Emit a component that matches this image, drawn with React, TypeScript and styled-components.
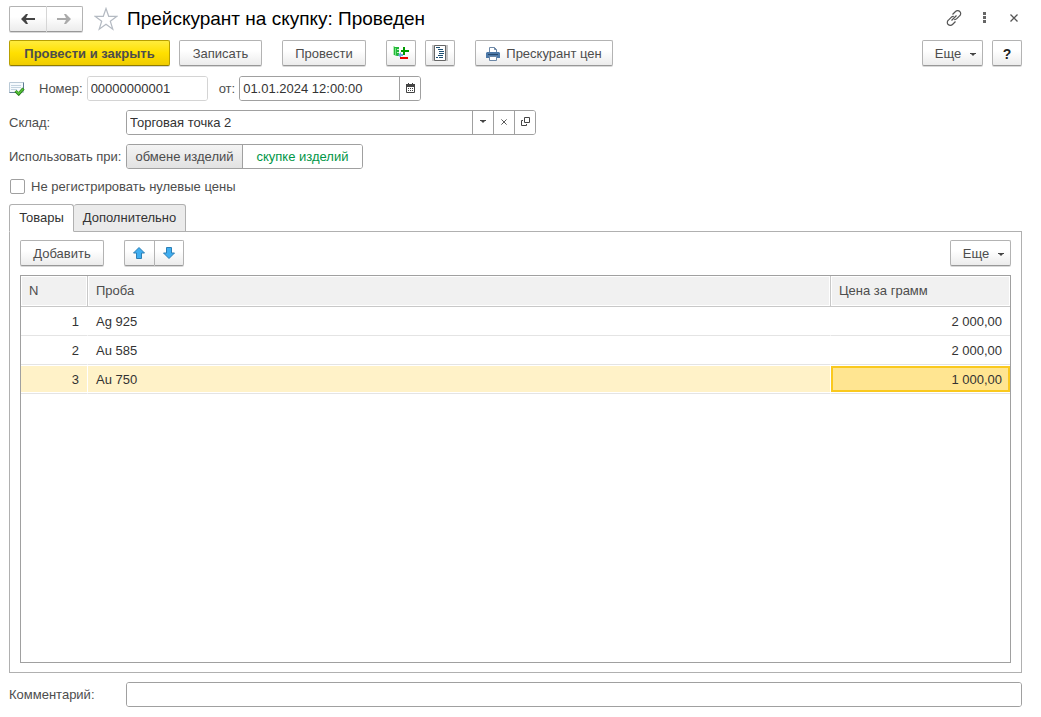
import React, { useState } from "react";
import styled, { createGlobalStyle, css } from "styled-components";

const GlobalStyle = createGlobalStyle`
  * { box-sizing: border-box; }
  body { margin: 0; background: #fff; }
  body, button, input, table {
    font-family: "Liberation Sans", Arial, sans-serif;
    font-size: 13px;
    line-height: 16px;
    color: #4d4d4d;
  }
  svg { flex: none; }
`;

const Page = styled.main`
  display: flex;
  flex-direction: column;
  min-height: 100vh;
  padding: 6px 19px 10px 9px;
`;

const TitleBar = styled.header`
  display: flex;
  align-items: center;
  height: 25px;
`;

const Title = styled.h1`
  flex: 1;
  margin: 0 0 0 9px;
  font-size: 19px;
  line-height: 24px;
  font-weight: 400;
  color: #000;
`;

const raised = css`
  border: 1px solid #b3b3b3;
  border-bottom-color: #989898;
  background: linear-gradient(#fff 40%, #ececec);
  box-shadow: 0 1px 0 #d9d9d9;
`;

const Button = styled.button<{ $primary?: boolean; $more?: boolean; $width?: number }>`
  ${raised}
  display: inline-flex;
  align-items: center;
  justify-content: center;
  gap: ${(p) => (p.$more ? 9 : 6)}px;
  height: 26px;
  padding: 2px 0 0 ${(p) => (p.$more ? 6 : 0)}px;
  width: ${(p) => p.$width ?? 30}px;
  border-radius: 2px;
  white-space: nowrap;
  ${(p) =>
    p.$primary &&
    css`
      border-color: #b8a000;
      border-bottom-color: #8f7c00;
      background: linear-gradient(#ffec3d, #ffe000 50%, #f0cc00);
      font-weight: 700;
    `}
`;

const IconButton = styled(Button)`
  padding: 0;
`;

const Segments = styled.div<{ $divider: string }>`
  display: inline-flex;
  button + button { border-left: 1px solid ${(p) => p.$divider}; }
`;

const Segment = styled.button<{ $width: number }>`
  ${raised}
  display: flex;
  align-items: center;
  justify-content: center;
  width: ${(p) => p.$width}px;
  height: 26px;
  padding: 0 1px 0 0;
  &:first-child { border-radius: 2px 0 0 2px; border-right: 0; }
  &:last-child { border-radius: 0 2px 2px 0; }
`;

const Star = styled.button`
  display: flex;
  margin-left: 11px;
  padding: 0;
  border: 0;
  background: none;
`;

const WindowTools = styled.div`
  display: flex;
  align-items: center;
`;

const Tool = styled.button`
  display: flex;
  align-items: center;
  justify-content: center;
  width: 30px;
  height: 24px;
  padding: 0 0 2px;
  border: 0;
  background: none;
  &:last-child { width: 16px; margin-left: 7px; }
`;

const Commands = styled.div`
  display: flex;
  align-items: center;
  gap: 9px;
  margin-top: 9px;
`;

const Group = styled.div`
  display: flex;
  gap: 9px;
  margin-left: 11px;
`;

const PushRight = styled.div`
  display: flex;
  gap: 9px;
  margin-left: auto;
`;

const Question = styled.span`
  font-size: 14px;
  font-weight: 700;
  color: #222;
`;

const FieldRow = styled.div<{ $gap: number }>`
  display: flex;
  align-items: center;
  margin-top: ${(p) => p.$gap}px;
`;

const Label = styled.label`
  width: 117px;
  white-space: nowrap;
`;

const InlineLabel = styled.label<{ $before: number }>`
  margin: 0 4px 0 ${(p) => p.$before}px;
`;

const Field = styled.div<{ $width?: number; $muted?: boolean }>`
  display: flex;
  ${(p) => (p.$width ? `width: ${p.$width}px;` : "flex: 1;")}
  height: 25px;
  border: 1px solid ${(p) => (p.$muted ? "#d4d4d4" : "#a0a0a0")};
  border-radius: 3px;
  overflow: hidden;
`;

const Input = styled.input`
  flex: 1;
  min-width: 0;
  padding: 0 3px;
  border: 0;
  outline: 0;
  background: #fff;
  color: #333;
`;

const FieldButton = styled.button`
  display: flex;
  align-items: center;
  justify-content: center;
  width: 21px;
  padding: 0 0 2px;
  border: 0;
  border-left: 1px solid #a0a0a0;
  background: #fff;
`;

const Toggle = styled.div`
  display: flex;
  height: 25px;
  border: 1px solid #a0a0a0;
  border-radius: 3px;
  overflow: hidden;
`;

const ToggleOption = styled.label<{ $width: number }>`
  display: flex;
  align-items: center;
  justify-content: center;
  width: ${(p) => p.$width}px;
  background: linear-gradient(#f4f4f4, #e2e2e2);
  & + & { border-left: 1px solid #a0a0a0; }
  &:has(input:checked) { background: #fff; color: #009646; }
  input { appearance: none; width: 0; height: 0; margin: 0; }
`;

const CheckRow = styled.label`
  display: flex;
  align-items: center;
  gap: 6px;
  margin-top: 10px;
  height: 16px;
`;

const Check = styled.input`
  appearance: none;
  width: 15px;
  height: 15px;
  margin: 0 0 1px 1px;
  border: 1px solid #a0a0a0;
  border-radius: 2px;
  background: #fff;
  &:checked { background: #009646; }
`;

const Tabs = styled.div`
  display: flex;
  height: 28px;
  margin: 9px 0 -1px;
  position: relative;
`;

const Tab = styled.button<{ $active: boolean; $width: number }>`
  width: ${(p) => p.$width}px;
  padding: 0;
  border: 1px solid #b0b0b0;
  border-radius: 3px 3px 0 0;
  background: ${(p) => (p.$active ? "#fff" : "#ebebeb")};
  border-bottom-color: ${(p) => (p.$active ? "#fff" : "#b0b0b0")};
  color: #333;
  & + & { border-left: 0; }
`;

const Panel = styled.section`
  flex: 1;
  display: flex;
  flex-direction: column;
  padding: 8px 10px 9px;
  border: 1px solid #b0b0b0;
`;

const PanelCommands = styled.div`
  display: flex;
  gap: 20px;
`;

const Grid = styled.div`
  flex: 1;
  margin-top: 9px;
  border: 1px solid #a0a0a0;
`;

const Table = styled.table`
  width: 100%;
  border-collapse: separate;
  border-spacing: 0;
  table-layout: fixed;
`;

const Head = styled.th<{ $width?: number }>`
  ${(p) => p.$width && `width: ${p.$width}px;`}
  height: 31px;
  padding: 0 8px;
  border-bottom: 1px solid #c8c8c8;
  background: #f1f1f1;
  box-shadow: inset 0 0 0 1px #fff;
  font-weight: 400;
  text-align: left;
  & + & { border-left: 1px solid #c8c8c8; }
`;

const Cell = styled.td<{ $right?: boolean }>`
  height: 29px;
  padding: 2px 8px 0;
  border-bottom: 1px solid #e4e4e4;
  color: #333;
  text-align: ${(p) => (p.$right ? "right" : "left")};
  & + & { border-left: 1px solid transparent; }
`;

const Row = styled.tr<{ $selected: boolean }>`
  ${(p) =>
    p.$selected &&
    css`
      ${Cell} {
        background: #fff2c8;
        background-clip: padding-box;
        box-shadow: inset 0 1px 0 #fff, inset 0 -1px 0 #fff;
      }
      ${Cell}:last-child {
        background: #ffe591;
        background-clip: padding-box;
        box-shadow: inset 0 1px 0 #fff, inset 0 -1px 0 #fff, inset 2px 0 0 #fac91e,
          inset -2px 0 0 #fac91e, inset 0 3px 0 #fac91e, inset 0 -3px 0 #fac91e;
      }
    `}
`;

const NavArrow = ({ back }: { back?: boolean }) => (
  <svg width="14" height="10" viewBox="0 0 14 10" fill={back ? "#444" : "#aaa"}>
    <path d={back ? "M0 5 5 0h2L5 4h9v2H5l2 4H5z" : "M14 5 9 0H7l2 4H0v2h9l-2 4h2z"} />
  </svg>
);

const StarIcon = () => (
  <svg width="24" height="24" viewBox="0 0 24 24" fill="#fff" stroke="#b4bac2" strokeWidth="1.2">
    <path d="M12 1.5l2.700 7.800h8.300l-6.700 4.900 2.500 8-6.800-4.900-6.800 4.900 2.500-8L1 9.300h8.300z" />
  </svg>
);

const LinkIcon = () => (
  <svg width="18" height="18" viewBox="0 0 18 18" fill="none" stroke="#555" strokeWidth="1.2">
    <path d="M7.500 5.500l3-3a2.900 2.900 0 0 1 4.300 0 2.900 2.900 0 0 1 0 4.200l-3 3a2.900 2.900 0 0 1-2.600.8" />
    <path d="M10.500 12.500l-3 3a2.900 2.900 0 0 1-4.300 0 2.900 2.900 0 0 1 0-4.200l3-3a2.900 2.900 0 0 1 2.600-.8" />
    <path d="M6.500 11.500l5-5" />
  </svg>
);

const DotsIcon = () => (
  <svg width="3" height="11" viewBox="0 0 3 11" fill="#666">
    <path d="M0 0h3v3H0zM0 4h3v3H0zM0 8h3v3H0z" />
  </svg>
);

const Cross = ({ size }: { size: number }) => (
  <svg width={size} height={size} viewBox="0 0 8 8" stroke="#555" strokeWidth="1.3">
    <path d="M.5.5l7 7M7.500.5l-7 7" />
  </svg>
);

const Caret = () => (
  <svg width="6" height="3" viewBox="0 0 6 3" fill="#444">
    <path d="M0 0h6v1H5L3 3 1 1H0z" />
  </svg>
);

const MovementsIcon = () => (
  <svg width="16" height="16" viewBox="0 0 16 16">
    <path d="M0 1h2v9H0z" fill="#b5efb5" />
    <path d="M1 2h5v9H4l-3-1z" fill="#22b83a" />
    <path d="M2 3h1v7H2z" fill="#7be487" />
    <path d="M4 4h2v1H4zM4 7h2v1H4z" fill="#c8f5c8" />
    <path d="M10 2h2v3h4v2h-4v3h-2V7H8V5h2z" fill="#009a00" />
    <path d="M5 10l3-3v2h2v2H8v2z" fill="#6ba5dc" />
    <path d="M7 12h8v2H7z" fill="#f00000" />
  </svg>
);

const JournalIcon = () => (
  <svg width="16" height="16" viewBox="0 0 16 16" fill="none">
    <path d="M0 0h16v16H0z" fill="#c4c4c4" />
    <path d="M2.500.5h11v15h-11z" fill="#fff" stroke="#666" />
    <path d="M4 2.500h4M6 4.500h5M7 6.500h5M7 8.500h5M6 10.500h5M4 12.500h2M7 12.500h4" stroke="#1d4f72" />
  </svg>
);

const PrinterIcon = () => (
  <svg width="14" height="14" viewBox="0 0 14 14">
    <path d="M3.500 5V.5h5l2 2V5" fill="#fff" stroke="#6c87a6" />
    <path d="M8.500.5v2h2" fill="none" stroke="#6c87a6" />
    <path d="M1 5h12l1 1v5H0V6z" fill="#4d79a8" />
    <path d="M2 7.500h10" stroke="#27496d" />
    <path d="M3.500 9.500h7v4h-7z" fill="#fff" stroke="#6c87a6" />
  </svg>
);

const PostedIcon = () => (
  <svg width="16" height="14" viewBox="0 0 16 14" fill="none">
    <path d="M.5.5h14v10H.5z" fill="#f6fafd" stroke="#b9c9d6" />
    <path d="M14.500.5v7M.5 10.500h6" stroke="#5e7c94" />
    <path d="M2 3.500h10M2 5.500h10M2 7.500h6" stroke="#c3d3df" />
    <path d="M6.500 9l3.200 3L14.500 6.500" stroke="#237a14" strokeWidth="3" />
    <path d="M6.800 9l2.900 2.600L14.200 6.700" stroke="#58c43a" strokeWidth="1.6" />
  </svg>
);

const CalendarIcon = () => (
  <svg width="9" height="10" viewBox="0 0 9 10">
    <path d="M.5 1.500h8v8h-8z" fill="#fff" stroke="#444" />
    <path d="M0 1h9v3H0zM2 0h1v1H2zM6 0h1v1H6z" fill="#444" />
    <path d="M2 5h1v1H2zM4 5h1v1H4zM6 5h1v1H6zM2 7h1v1H2zM4 7h1v1H4zM6 7h1v1H6z" fill="#444" />
  </svg>
);

const OpenIcon = () => (
  <svg width="9" height="9" viewBox="0 0 9 9" fill="none" stroke="#444">
    <path d="M3.500.5h5v5h-5zM2 3.500H.5v5h5V7" />
  </svg>
);

const MoveArrow = ({ down }: { down?: boolean }) => (
  <svg width="12" height="12" viewBox="0 0 12 12" fill="#40aef0" stroke="#2c7fb5">
    <path d={down ? "M6 11.500L.5 6h3V.5h5V6h3z" : "M6 .5L.5 6h3v5.500h5V6h3z"} strokeLinejoin="round" />
  </svg>
);

const MoreLabel = () => (
  <>
    <span>Еще</span>
    <Caret />
  </>
);

const rows = [
  { n: 1, sample: "Ag 925", price: "2 000,00" },
  { n: 2, sample: "Au 585", price: "2 000,00" },
  { n: 3, sample: "Au 750", price: "1 000,00" },
];

export default function App() {
  const [tab, setTab] = useState("goods");
  const [selected, setSelected] = useState(3);

  return (
    <Page>
      <GlobalStyle />
      <TitleBar>
        <Segments $divider="#d6d6d6">
          <Segment $width={37} aria-label="Назад"><NavArrow back /></Segment>
          <Segment $width={37} aria-label="Вперед"><NavArrow /></Segment>
        </Segments>
        <Star aria-label="В избранное"><StarIcon /></Star>
        <Title>Прейскурант на скупку: Проведен</Title>
        <WindowTools>
          <Tool aria-label="Ссылка"><LinkIcon /></Tool>
          <Tool aria-label="Меню"><DotsIcon /></Tool>
          <Tool aria-label="Закрыть"><Cross size={8} /></Tool>
        </WindowTools>
      </TitleBar>

      <Commands>
        <Button $primary $width={161}>Провести и закрыть</Button>
        <Button $width={83}>Записать</Button>
        <Group><Button $width={84}>Провести</Button></Group>
        <Group>
          <IconButton aria-label="Движения"><MovementsIcon /></IconButton>
          <IconButton aria-label="Журнал"><JournalIcon /></IconButton>
        </Group>
        <Group><Button $width={138}><PrinterIcon />Прескурант цен</Button></Group>
        <PushRight>
          <Button $more $width={61}><MoreLabel /></Button>
          <Button aria-label="Справка"><Question>?</Question></Button>
        </PushRight>
      </Commands>

      <FieldRow $gap={10}>
        <PostedIcon />
        <InlineLabel htmlFor="number" $before={14}>Номер:</InlineLabel>
        <Field $width={121} $muted><Input id="number" defaultValue="00000000001" /></Field>
        <InlineLabel htmlFor="date" $before={11}>от:</InlineLabel>
        <Field $width={182}>
          <Input id="date" defaultValue="01.01.2024 12:00:00" />
          <FieldButton aria-label="Календарь"><CalendarIcon /></FieldButton>
        </Field>
      </FieldRow>

      <FieldRow $gap={9}>
        <Label htmlFor="store">Склад:</Label>
        <Field $width={410}>
          <Input id="store" defaultValue="Торговая точка 2" />
          <FieldButton aria-label="Выбрать"><Caret /></FieldButton>
          <FieldButton aria-label="Очистить"><Cross size={6} /></FieldButton>
          <FieldButton aria-label="Открыть"><OpenIcon /></FieldButton>
        </Field>
      </FieldRow>

      <FieldRow $gap={9}>
        <Label as="span">Использовать при:</Label>
        <Toggle role="radiogroup" aria-label="Использовать при">
          <ToggleOption $width={115}><input type="radio" name="use" />обмене изделий</ToggleOption>
          <ToggleOption $width={120}><input type="radio" name="use" defaultChecked />скупке изделий</ToggleOption>
        </Toggle>
      </FieldRow>

      <CheckRow><Check type="checkbox" />Не регистрировать нулевые цены</CheckRow>

      <Tabs role="tablist">
        <Tab role="tab" aria-selected={tab === "goods"} $width={65} $active={tab === "goods"} onClick={() => setTab("goods")}>Товары</Tab>
        <Tab role="tab" aria-selected={tab === "extra"} $width={112} $active={tab === "extra"} onClick={() => setTab("extra")}>Дополнительно</Tab>
      </Tabs>

      <Panel>
        <PanelCommands>
          <Button $width={84}>Добавить</Button>
          <Segments $divider="#b3b3b3">
            <Segment $width={30} aria-label="Вверх"><MoveArrow /></Segment>
            <Segment $width={30} aria-label="Вниз"><MoveArrow down /></Segment>
          </Segments>
          <PushRight><Button $more $width={61}><MoreLabel /></Button></PushRight>
        </PanelCommands>
        <Grid>
          <Table>
            <thead>
              <tr><Head $width={66}>N</Head><Head>Проба</Head><Head $width={180}>Цена за грамм</Head></tr>
            </thead>
            <tbody>
              {rows.map((r) => (
                <Row key={r.n} $selected={r.n === selected} onClick={() => setSelected(r.n)}>
                  <Cell $right>{r.n}</Cell>
                  <Cell>{r.sample}</Cell>
                  <Cell $right>{r.price}</Cell>
                </Row>
              ))}
            </tbody>
          </Table>
        </Grid>
      </Panel>

      <FieldRow $gap={9}>
        <Label htmlFor="comment">Комментарий:</Label>
        <Field><Input id="comment" /></Field>
      </FieldRow>
    </Page>
  );
}
